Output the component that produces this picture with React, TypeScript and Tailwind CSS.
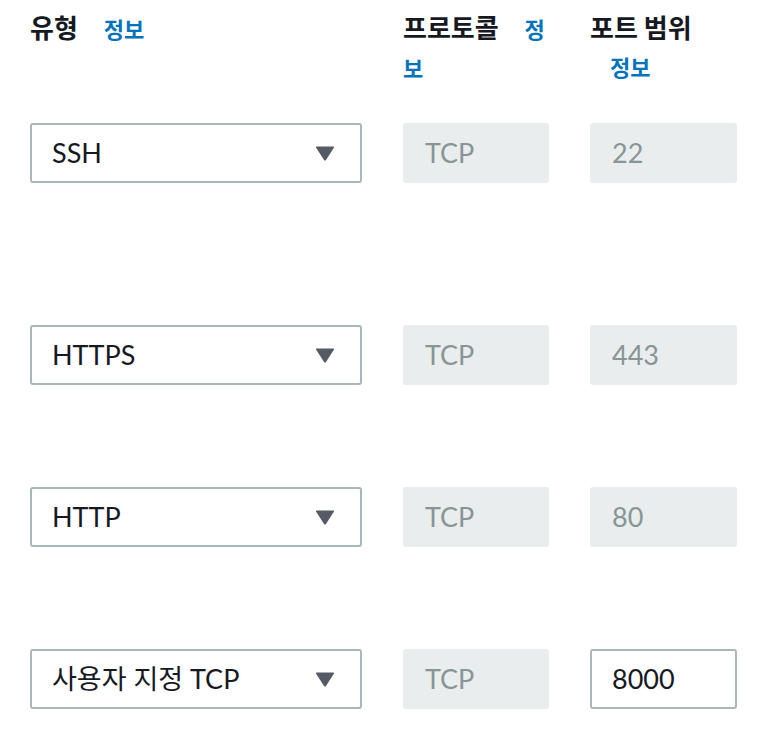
const rows = [
  { type: "SSH", port: "22", editable: false, gap: "mt-0" },
  { type: "HTTPS", port: "443", editable: false, gap: "mt-[142px]" },
  { type: "HTTP", port: "80", editable: false, gap: "mt-[102px]" },
  { type: "사용자 지정 TCP", port: "8000", editable: true, gap: "mt-[102px]" },
]

const font = { fontFamily: "Lato, 'Noto Sans CJK KR', sans-serif" }

function Header({ label }: { label: string }) {
  return (
    <div className="text-[26px] leading-[38px] font-bold text-[#16191f]">
      {label}{" "}
      <a className="ml-5 text-[22px] font-bold text-[#0073bb] cursor-pointer">정보</a>
    </div>
  )
}

function Caret() {
  return (
    <svg width="20" height="15" viewBox="0 0 20 15" className="shrink-0">
      <path d="M1 1.5 Q0.5 0.5 2 0.5 H18 Q19.5 0.5 19 1.5 L11 14 Q10 15 9 14 Z" fill="#545b64" />
    </svg>
  )
}

export default function App() {
  return (
    <div className="w-[758px] h-[744px] bg-white pl-[30px] pt-[8px]" style={{ fontFamily: "'Noto Sans CJK KR', sans-serif" }}>
      <div className="grid grid-cols-[332px_146px_147px] gap-x-[41px]">
        <Header label="유형" />
        <Header label="프로토콜" />
        <Header label="포트 범위" />
      </div>

      <div className="mt-[37px]">
        {rows.map((r) => (
          <div key={r.type} className={`grid grid-cols-[332px_146px_147px] gap-x-[41px] ${r.gap}`} style={font}>
            <div className="h-[60px] border-2 border-[#aab7b8] rounded-[3px] flex items-center justify-between pl-[20px] pr-[25px] text-[27px] text-[#16191f]">
              <span>{r.type}</span>
              <Caret />
            </div>
            <div className="h-[60px] bg-[#eaeded] rounded-[3px] flex items-center pl-[22px] text-[27px] text-[#879596]">
              TCP
            </div>
            {r.editable ? (
              <div className="h-[60px] border-2 border-[#aab7b8] rounded-[3px] flex items-center pl-[20px] text-[27px] text-[#16191f]">
                {r.port}
              </div>
            ) : (
              <div className="h-[60px] bg-[#eaeded] rounded-[3px] flex items-center pl-[22px] text-[27px] text-[#879596]">
                {r.port}
              </div>
            )}
          </div>
        ))}
      </div>
    </div>
  )
}
